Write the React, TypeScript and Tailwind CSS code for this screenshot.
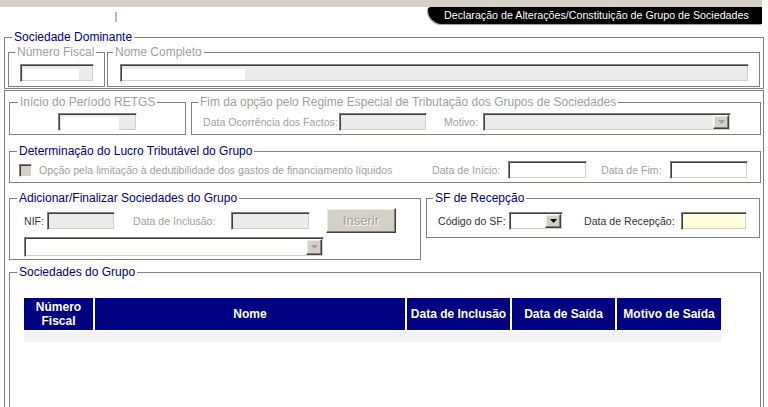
import React from "react";

const sunken =
  "border border-t-[#808080] border-l-[#808080] border-r-white border-b-white shadow-[inset_1px_1px_0_#404040,inset_-1px_-1px_0_#d4d0c8]";
const raised =
  "border border-t-white border-l-white border-r-[#404040] border-b-[#404040] shadow-[inset_-1px_-1px_0_#808080,inset_1px_1px_0_#ebe9e3]";

function Arrow({ dim }: { dim?: boolean }) {
  return (
    <svg width="7" height="4" viewBox="0 0 7 4">
      <path d="M0 0h7L3.5 4z" fill={dim ? "#a0a0a0" : "#000"} />
    </svg>
  );
}

function DropBtn({ dim }: { dim?: boolean }) {
  return (
    <div className={`${raised} w-[16px] h-full bg-[#d4d0c8] flex items-center justify-center`}>
      <Arrow dim={dim} />
    </div>
  );
}

function Legend({ children, dim, className }: { children: React.ReactNode; dim?: boolean; className: string }) {
  return (
    <legend className={`text-[12px] leading-[14px] px-[2px] ${dim ? "text-[#a0a0a0]" : "text-[#000080]"} ${className}`}>
      {children}
    </legend>
  );
}

function Label({ children, className }: { children: React.ReactNode; className: string }) {
  return <span className={`text-[10.6px] leading-[14px] whitespace-nowrap ${className}`}>{children}</span>;
}

export default function App() {
  return (
    <div className="w-[768px] h-[407px] overflow-hidden bg-white font-['Liberation_Sans',Arial,sans-serif]">
      {/* top strip */}
      <div className="h-[7px] w-[762px] bg-[#d4d0c8]" />
      <div className="flex w-[762px] h-[17px]">
        <div className="ml-[115px] mt-[5px] w-[2px] h-[10px] bg-[#9cc0e6]" />
        <div className="ml-auto w-[334px] h-[17px] bg-black rounded-bl-[16px] rounded-tl-[3px] pl-[16px] text-white text-[10.7px] leading-[17px] whitespace-nowrap shadow-[-1px_1px_1px_#9a9a9a]">
          Declaração de Alterações/Constituição de Grupo de Sociedades
        </div>
      </div>

      {/* Sociedade Dominante */}
      <fieldset className="ml-[4px] mt-[6px] w-[760px] border border-[#808080] min-w-0">
        <Legend className="ml-[7px]">Sociedade Dominante</Legend>
        <div className="flex gap-[2px] pl-[3px] pr-[3px] pt-[1px] pb-[1px]">
          <fieldset className="w-[97px] border border-[#808080] min-w-0">
            <Legend dim className="ml-[6px]">Número Fiscal</Legend>
            <div className={`${sunken} ml-[11px] mt-[5px] mb-[4px] w-[74px] h-[18px] bg-[#ebebeb] p-[1px]`}>
              <div className="ml-[1px] mt-[3px] w-[56px] h-[11px] bg-white" />
            </div>
          </fieldset>
          <fieldset className="flex-1 border border-[#808080] min-w-0">
            <Legend dim className="ml-[5px]">Nome Completo</Legend>
            <div className={`${sunken} ml-[12px] mt-[5px] mb-[4px] w-[629px] h-[18px] bg-[#ebebeb] p-[1px]`}>
              <div className="ml-[0px] mt-[3px] w-[123px] h-[11px] bg-white" />
            </div>
          </fieldset>
        </div>
      </fieldset>

      {/* main box */}
      <div className="ml-[4px] mt-[1px] w-[760px] h-[330px] border border-[#808080] pl-[4px] pr-[2px] pt-[4px]">
        {/* row 1 */}
        <div className="flex gap-[5px]">
          <fieldset className="w-[177px] border border-[#808080] min-w-0">
            <Legend dim className="ml-[8px]">Início do Período RETGS</Legend>
            <div className="flex justify-center mt-[4px] mb-[3px]">
              <div className={`${sunken} w-[79px] h-[18px] bg-[#ebebeb] p-[1px]`}>
                <div className="ml-[1px] mt-[2px] w-[58px] h-[13px] bg-white" />
              </div>
            </div>
          </fieldset>
          <fieldset className="flex-1 border border-[#808080] min-w-0">
            <Legend dim className="ml-[6px]">Fim da opção pelo Regime Especial de Tributação dos Grupos de Sociedades</Legend>
            <div className="flex items-center h-[18px] mt-[4px] mb-[3px] pl-[11px]">
              <Label className="w-[136px] text-[#a0a0a0]">Data Ocorrência dos Factos:</Label>
              <div className={`${sunken} w-[88px] h-[18px] bg-[#ebebeb]`} />
              <Label className="ml-[17px] w-[39px] text-[#a0a0a0]">Motivo:</Label>
              <div className={`${sunken} w-[248px] h-[18px] bg-[#ebebeb] p-[1px] flex justify-end`}>
                <DropBtn dim />
              </div>
            </div>
          </fieldset>
        </div>

        {/* row 2 */}
        <fieldset className="mt-[9px] border border-[#808080] min-w-0">
          <Legend className="ml-[7px]">Determinação do Lucro Tributável do Grupo</Legend>
          <div className="flex items-center h-[18px] mt-[3px] mb-[3px] pl-[9px]">
            <div className={`${sunken} w-[13px] h-[13px] bg-[#d4d0c8]`} />
            <Label className="ml-[7px] w-[393px] text-[#a0a0a0]">
              Opção pela limitação à dedutibilidade dos gastos de financiamento líquidos
            </Label>
            <Label className="w-[76px] text-[#a0a0a0]">Data de Início:</Label>
            <div className={`${sunken} w-[79px] h-[18px] bg-white`} />
            <Label className="ml-[14px] w-[69px] text-[#a0a0a0]">Data de Fim:</Label>
            <div className={`${sunken} w-[78px] h-[18px] bg-white`} />
          </div>
        </fieldset>

        {/* row 3 */}
        <div className="flex items-start gap-[5px] mt-[8px]">
          <fieldset className="w-[412px] border border-[#808080] min-w-0">
            <Legend className="ml-[7px]">Adicionar/Finalizar Sociedades do Grupo</Legend>
            <div className="flex items-center h-[25px] mt-[3px] pl-[14px]">
              <Label className="w-[23px] text-[#333]">NIF:</Label>
              <div className={`${sunken} w-[68px] h-[18px] bg-[#ebebeb]`} />
              <Label className="ml-[18px] w-[98px] text-[#a0a0a0]">Data de Inclusão:</Label>
              <div className={`${sunken} w-[79px] h-[18px] bg-[#ebebeb]`} />
              <div
                className={`${raised} ml-[16px] w-[70px] h-[25px] bg-[#d4d0c8] flex items-center justify-center text-[13px] text-[#a0a0a0] [text-shadow:1px_1px_0_#fff]`}
              >
                Inserir
              </div>
            </div>
            <div className="pl-[14px] mt-[4px] mb-[2px]">
              <div className={`${sunken} w-[300px] h-[20px] bg-white p-[1px] flex justify-end`}>
                <DropBtn dim />
              </div>
            </div>
          </fieldset>
          <fieldset className="w-[334px] border border-[#808080] min-w-0">
            <Legend className="ml-[6px]">SF de Recepção</Legend>
            <div className="flex items-center h-[18px] mt-[7px] mb-[7px] pl-[11px]">
              <Label className="w-[71px] text-[#333]">Código do SF:</Label>
              <div className={`${sunken} w-[54px] h-[18px] bg-white p-[1px] flex justify-end`}>
                <DropBtn />
              </div>
              <Label className="ml-[21px] w-[97px] text-[#333]">Data de Recepção:</Label>
              <div className={`${sunken} w-[66px] h-[18px] bg-[#ffffe0]`} />
            </div>
          </fieldset>
        </div>

        {/* row 4 */}
        <fieldset className="mt-[5px] h-[200px] border border-[#808080] min-w-0">
          <Legend className="ml-[7px]">Sociedades do Grupo</Legend>
          <div className="ml-[14px] mt-[19px] w-[697px]">
            <div className="grid grid-cols-[69px_310px_103px_103px_104px] gap-x-[2px]">
              {["Número Fiscal", "Nome", "Data de Inclusão", "Data de Saída", "Motivo de Saída"].map((h) => (
                <div
                  key={h}
                  className={`h-[32px] bg-[#000080] text-white font-bold text-[12px] leading-[14px] flex items-center justify-center text-center ${
                    h === "Número Fiscal" ? "px-[4px]" : "whitespace-nowrap"
                  }`}
                >
                  {h}
                </div>
              ))}
            </div>
            <div className="mt-[2px] h-[10px] bg-[#f2f2f2]" />
          </div>
        </fieldset>
      </div>
    </div>
  );
}
